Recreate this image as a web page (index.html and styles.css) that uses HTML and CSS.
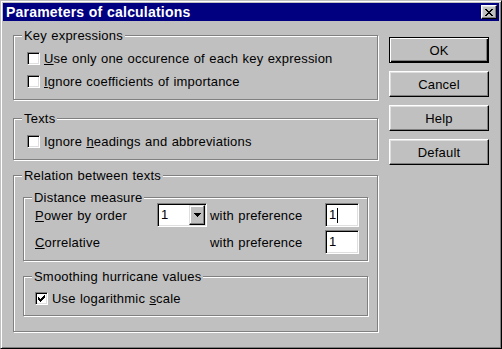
FILE: index.html
```html
<!DOCTYPE html>
<html lang="en">
<head>
    <meta charset="UTF-8">
    <title>Parameters of calculations</title>
    <link rel="stylesheet" href="styles.css">
</head>
<body>
<div class="window">
    <div class="titlebar">
        <span class="title">Parameters of calculations</span>
        <span class="close">
            <svg width="8" height="7" viewBox="0 0 8 7" shape-rendering="crispEdges"><path d="M0 0h2v1H0zM6 0h2v1H6zM1 1h2v1H1zM5 1h2v1H5zM2 2h4v1H2zM3 3h2v1H3zM2 4h4v1H2zM1 5h2v1H1zM5 5h2v1H5zM0 6h2v1H0zM6 6h2v1H6z" fill="#000"/></svg>
        </span>
    </div>

    <div class="content">
        <div class="groups">
            <div class="group group-key">
                <div class="legend">Key expressions</div>
                <label class="check-row"><span class="check"></span><span><u>U</u>se only one occurence of each key expression</span></label>
                <label class="check-row second"><span class="check"></span><span><u>I</u>gnore coefficients of importance</span></label>
            </div>

            <div class="group group-texts">
                <div class="legend">Texts</div>
                <label class="check-row"><span class="check"></span><span>Ignore <u>h</u>eadings and abbreviations</span></label>
            </div>

            <div class="group group-relation">
                <div class="legend">Relation between texts</div>

                <div class="group group-distance">
                    <div class="legend">Distance measure</div>
                    <div class="measure-grid">
                        <span><u>P</u>ower by order</span>
                        <span class="combo">
                            <span class="combo-value">1</span>
                            <span class="combo-btn">
                                <svg width="7" height="4" viewBox="0 0 7 4" shape-rendering="crispEdges"><path d="M0 0h7v1H0zM1 1h5v1H1zM2 2h3v1H2zM3 3h1v1H3z" fill="#000"/></svg>
                            </span>
                        </span>
                        <span>with preference</span>
                        <span class="field">1<span class="caret"></span></span>

                        <span><u>C</u>orrelative</span>
                        <span></span>
                        <span>with preference</span>
                        <span class="field">1</span>
                    </div>
                </div>

                <div class="group group-smooth">
                    <div class="legend">Smoothing hurricane values</div>
                    <label class="check-row"><span class="check checked">
                        <svg width="7" height="7" viewBox="0 0 7 7" shape-rendering="crispEdges"><path d="M6 0h1v1H6zM5 1h2v1H5zM0 2h1v1H0zM4 2h3v1H4zM0 3h2v1H0zM3 3h3v1H3zM0 4h5v1H0zM1 5h3v1H1zM2 6h1v1H2z" fill="#000"/></svg>
                    </span><span>Use logarithmic <u>s</u>cale</span></label>
                </div>
            </div>
        </div>

        <div class="buttons">
            <button class="btn default">OK</button>
            <button class="btn">Cancel</button>
            <button class="btn">Help</button>
            <button class="btn">Default</button>
        </div>
    </div>
</div>
</body>
</html>
```

FILE: styles.css
```css
body {
    margin: 0; font-family: "Liberation Sans", Arial, sans-serif; font-size: 13px;
    letter-spacing: 0.2px; word-spacing: 0.5px; color: #000; background: #c0c0c0;
}

/* window frame */
.window {
    width: 502px; height: 349px; box-sizing: border-box; padding: 2px;
    background: #c0c0c0; border: 1px solid; border-color: #c0c0c0 #000 #000 #c0c0c0;
    box-shadow: inset 1px 1px #fff, inset -1px -1px #808080;
}
.titlebar {
    height: 18px; background: #000080; color: #fff;
    display: flex; align-items: center; justify-content: space-between;
    padding: 0 2px 0 3px;
}
.title { font-weight: bold; font-size: 14px; letter-spacing: 0.2px; line-height: 18px; }
.close {
    width: 16px; height: 14px; box-sizing: border-box; background: #c0c0c0;
    border: 1px solid; border-color: #fff #000 #000 #fff;
    box-shadow: inset -1px -1px #808080, inset 1px 1px #dfdfdf;
    display: flex; align-items: center; justify-content: center;
}
.close svg { display: block; margin-left: -1px; }

.content { display: flex; padding-left: 10px; }
.groups { width: 365px; padding-top: 14px; }

/* etched group boxes */
.group { border: 1px solid #808080; box-shadow: inset 1px 1px #fff, 1px 1px #fff; }
.legend {
    width: fit-content; margin: -7px 0 0 8px; padding: 0 2px;
    background: #c0c0c0; line-height: 13px;
}
.group-key { padding-bottom: 9px; }
.group-texts { margin-top: 18px; padding-bottom: 9px; }
.group-relation { margin-top: 15px; padding-bottom: 15px; }
.group-distance { margin: 15px 9px 0; padding-bottom: 6px; }
.group-smooth { margin: 15px 9px 0; padding-bottom: 8px; }

.check-row { display: flex; align-items: center; height: 17px; margin: 8px 0 0 13px; }
.check-row.second { margin-top: 6px; }
.group-smooth .check-row { margin: 7px 0 0 11px; }
.check {
    width: 13px; height: 13px; box-sizing: border-box; margin-right: 4px; background: #fff;
    border: 1px solid; border-color: #808080 #fff #fff #808080;
    box-shadow: inset 1px 1px #000, inset -1px -1px #dfdfdf;
    display: flex; align-items: center; justify-content: center;
}
.check svg { display: block; }

/* distance measure rows */
.measure-grid {
    display: grid; grid-template-columns: 122px 53px 115px 34px;
    grid-auto-rows: 24px; row-gap: 3px; align-items: center;
    margin-top: -1px; padding-left: 11px;
}
.combo, .field {
    height: 24px; box-sizing: border-box; background: #fff;
    border: 1px solid; border-color: #808080 #fff #fff #808080;
    box-shadow: inset 1px 1px #000, inset -1px -1px #dfdfdf;
}
.combo { width: 50px; display: flex; padding: 1px; }
.combo-value { flex: 1; padding-left: 2px; line-height: 20px; }
.combo-btn {
    width: 16px; box-sizing: border-box; background: #c0c0c0;
    border: 1px solid; border-color: #dfdfdf #000 #000 #dfdfdf;
    box-shadow: inset -1px -1px #808080, inset 1px 1px #fff;
    display: flex; align-items: center; justify-content: center;
}
.combo-btn svg { display: block; }
.field { width: 34px; padding-left: 3px; line-height: 22px; display: flex; align-items: center; }
.caret { width: 1px; height: 15px; background: #000; margin-left: 1px; }

/* command buttons */
.buttons { display: flex; flex-direction: column; gap: 8px; padding-top: 16px; margin-left: 11px; }
.btn {
    width: 100px; height: 26px; box-sizing: border-box; padding: 0;
    font: inherit; letter-spacing: inherit; color: #000; background: #c0c0c0;
    border: 1px solid; border-color: #fff #000 #000 #fff;
    box-shadow: inset -1px -1px #808080, inset 1px 1px #dfdfdf;
}
.btn.default {
    border-color: #000;
    box-shadow: inset 1px 1px #fff, inset -1px -1px #000, inset -2px -2px #808080;
}
```
